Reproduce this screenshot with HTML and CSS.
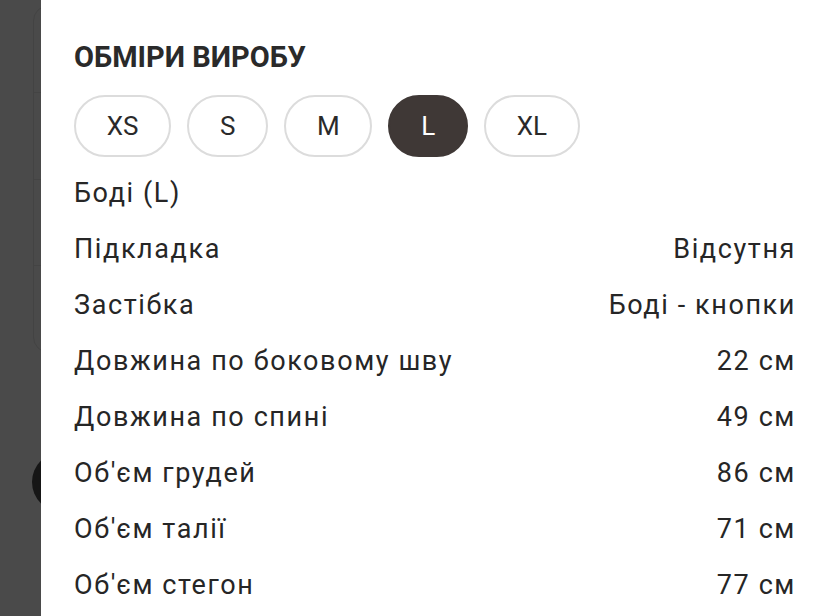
FILE: index.html
```html
<!DOCTYPE html>
<html lang="uk">
<head>
<meta charset="utf-8">
<link rel="stylesheet" href="styles.css">
</head>
<body>
<div class="screen">
  <div class="backdrop">
    <div class="bg-card">
      <div class="bg-row"></div>
      <div class="bg-row"></div>
      <div class="bg-row"></div>
      <div class="bg-row last"></div>
    </div>
    <div class="bg-dot"></div>
  </div>
  <div class="panel">
    <h2 class="title">ОБМІРИ ВИРОБУ</h2>
    <div class="sizes">
      <span class="pill">XS</span>
      <span class="pill">S</span>
      <span class="pill">M</span>
      <span class="pill active">L</span>
      <span class="pill">XL</span>
    </div>
    <div class="row"><span>Боді (L)</span></div>
    <div class="row"><span>Підкладка</span><span>Відсутня</span></div>
    <div class="row"><span>Застібка</span><span>Боді - кнопки</span></div>
    <div class="row"><span>Довжина по боковому шву</span><span>22 см</span></div>
    <div class="row"><span>Довжина по спині</span><span>49 см</span></div>
    <div class="row"><span>Об'єм грудей</span><span>86 см</span></div>
    <div class="row"><span>Об'єм талії</span><span>71 см</span></div>
    <div class="row"><span>Об'єм стегон</span><span>77 см</span></div>
  </div>
</div>
</body>
</html>
```

FILE: styles.css
```css
html, body {
  margin: 0;
  padding: 0;
  background: #4a4a4a;
  font-family: Roboto, "Noto Sans", sans-serif;
}

.screen {
  display: flex;
  width: 828px;
  height: 616px;
  overflow: hidden;
}

.backdrop {
  width: 41px;
  flex-shrink: 0;
  overflow: hidden;
  display: flex;
  flex-direction: column;
  gap: 99px;
  padding-top: 5px;
}

.bg-card {
  margin-left: 33px;
  width: 120px;
  height: 348px;
  flex-shrink: 0;
  border: 1px solid #434343;
  border-radius: 16px;
  box-sizing: border-box;
  display: flex;
  flex-direction: column;
}

.bg-row {
  flex: 1;
  border-bottom: 1px solid #444444;
}

.bg-row.last {
  border-bottom: none;
}

.bg-dot {
  margin-left: 32px;
  width: 60px;
  height: 60px;
  flex-shrink: 0;
  border-radius: 50%;
  background: #161616;
}

.panel {
  flex: 1;
  background: #ffffff;
  padding: 40px 32px 0 33px;
  color: #262626;
}

.title {
  margin: 0;
  font-size: 29px;
  line-height: 34px;
  font-weight: 700;
  color: #2a2a2a;
}

.sizes {
  display: flex;
  gap: 16px;
  margin-top: 21px;
  margin-bottom: 8px;
}

.pill {
  height: 62px;
  padding: 0 30.75px;
  box-sizing: border-box;
  border: 2px solid #dcdcdc;
  border-radius: 31px;
  display: flex;
  align-items: center;
  justify-content: center;
  font-size: 26px;
  color: #2a2a2a;
}

.pill.active {
  background: #3f3836;
  border-color: #3f3836;
  color: #ffffff;
}

.row {
  display: flex;
  justify-content: space-between;
  height: 56px;
  align-items: center;
  font-size: 27px;
  letter-spacing: 1.6px;
  color: #262626;
}
```
